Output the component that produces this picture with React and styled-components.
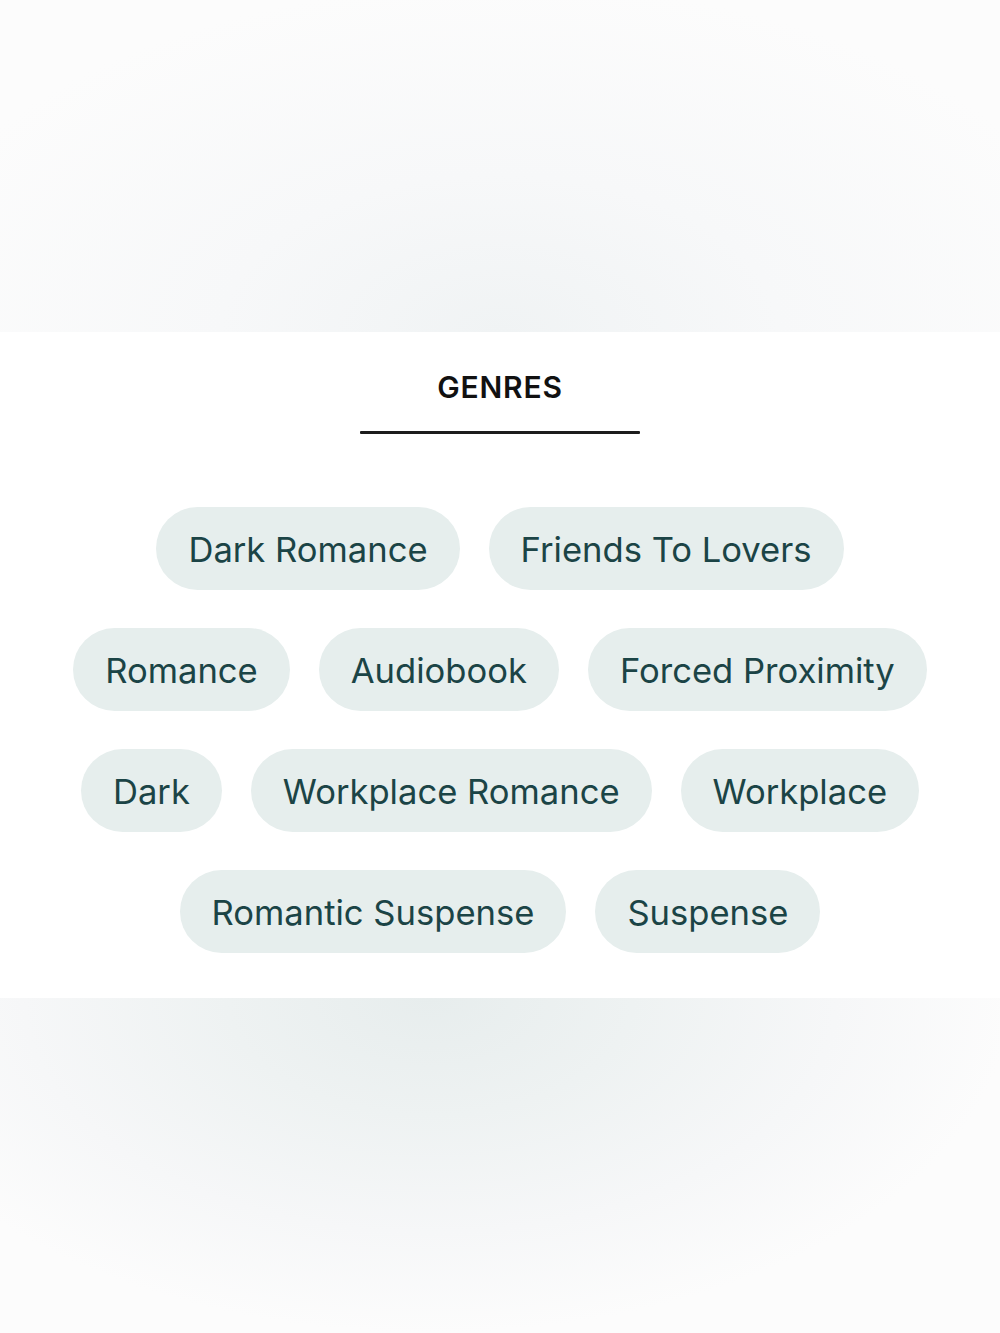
import React from 'react'
import styled, { createGlobalStyle } from 'styled-components'

const GlobalStyle = createGlobalStyle`
  html, body {
    margin: 0;
    padding: 0;
    background: #fcfcfc;
  }
  * {
    box-sizing: border-box;
  }
`

const Page = styled.div`
  display: flex;
  flex-direction: column;
  min-height: 1333px;
  font-family: Inter, 'Noto Sans', sans-serif;
`

const TopShade = styled.div`
  height: 332px;
  background: radial-gradient(
    ellipse 62% 105% at 50% 100%,
    #f0f3f4 0%,
    #f7f8f9 45%,
    #fcfcfc 100%
  );
`

const BottomShade = styled.div`
  flex: 1;
  background: radial-gradient(
    ellipse 58% 100% at 43% 0%,
    #e7eded 0%,
    #eef2f2 35%,
    #f6f7f8 70%,
    #fcfcfc 100%
  );
`

const Panel = styled.section`
  background: #ffffff;
  padding: 40px 0 45px;
  display: flex;
  flex-direction: column;
  align-items: center;
`

const Title = styled.h2`
  margin: 0;
  font-size: 30px;
  line-height: 30px;
  font-weight: 600;
  letter-spacing: 0.8px;
  color: #111111;
`

const Rule = styled.div`
  width: 280px;
  height: 3px;
  margin-top: 29px;
  background: #1c1c1c;
  border-radius: 1px;
`

const TagList = styled.ul`
  list-style: none;
  margin: 73px 0 0;
  padding: 0;
  width: 890px;
  display: flex;
  flex-wrap: wrap;
  justify-content: center;
  gap: 38px 29px;
`

const Tag = styled.li`
  height: 83px;
  padding: 0 32px;
  display: flex;
  align-items: center;
  border-radius: 42px;
  background: #e6eeed;
  color: #1b4446;
  font-size: 34.6px;
  font-weight: 400;
  white-space: nowrap;
`

const genres = [
  'Dark Romance',
  'Friends To Lovers',
  'Romance',
  'Audiobook',
  'Forced Proximity',
  'Dark',
  'Workplace Romance',
  'Workplace',
  'Romantic Suspense',
  'Suspense',
]

export default function App() {
  return (
    <Page>
      <GlobalStyle />
      <TopShade />
      <Panel>
        <Title>GENRES</Title>
        <Rule />
        <TagList>
          {genres.map((g) => (
            <Tag key={g}>{g}</Tag>
          ))}
        </TagList>
      </Panel>
      <BottomShade />
    </Page>
  )
}
